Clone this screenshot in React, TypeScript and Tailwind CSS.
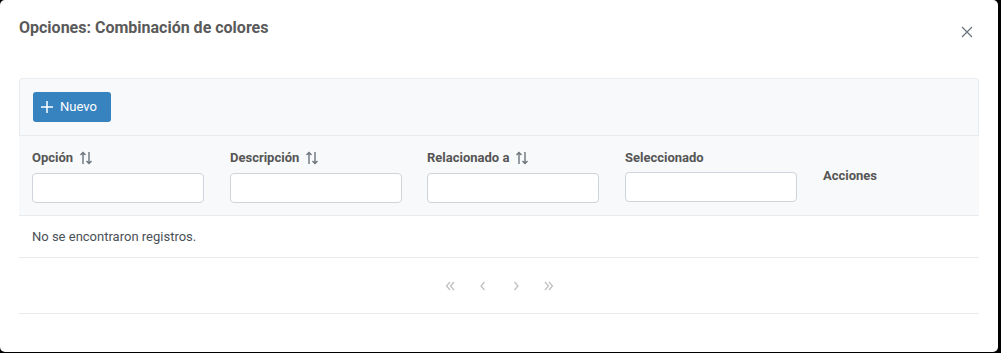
import React from "react";

const SortIcon = () => (
  <svg width="14" height="14" viewBox="0 0 14 14" fill="none" stroke="#6c757d" strokeWidth="1.4" className="ml-[6px]">
    <path d="M4 13V1.5M1.5 4L4 1.5L6.5 4" />
    <path d="M10 1V12.5M7.5 10L10 12.5L12.5 10" />
  </svg>
);

const Col = ({ label, sort, input = true, gap = 6 }: { label: string; sort?: boolean; input?: boolean; gap?: number }) => (
  <div className="pl-[13px] pr-[12px] flex flex-col justify-center">
    <div className="flex items-center h-[18px] text-[13px] font-bold text-[#555]">
      {label}
      {sort && <SortIcon />}
    </div>
    {input && (
      <div
        className={`${gap === 6 ? "mt-[6px]" : "mt-[5px]"} h-[30px] w-[172px] rounded-[4px] border border-[#ced4da] bg-white`}
      />
    )}
  </div>
);

export default function App() {
  return (
    <div className="w-[1001px] h-[353px] bg-black" style={{ fontFamily: "Roboto, 'Liberation Sans', sans-serif" }}>
      <div className="w-[998px] h-[352px] bg-white rounded-[5px] flex flex-col">
        <div className="flex items-start justify-between pl-[19px] pr-[25px] h-[60px]">
          <div className="mt-[16px] leading-[24px] text-[16px] font-bold text-[#5a5a5a]">Opciones: Combinación de colores</div>
          <svg width="12" height="12" viewBox="0 0 12 12" stroke="#6c757d" strokeWidth="1.3" className="mt-[26px]">
            <path d="M1 1L11 11M11 1L1 11" />
          </svg>
        </div>
        <div className="mx-[19px] mt-[18px] w-[960px]">
          <div className="h-[57px] bg-[#f8f9fa] border-t border-x border-[#e9ecef] rounded-t-[4px] flex items-center px-[13px]">
            <div className="h-[30px] w-[78px] bg-[#3783bf] rounded-[3px] flex items-center pl-[8px] text-white text-[13px]">
              <svg width="12" height="12" viewBox="0 0 12 12" stroke="white" strokeWidth="1.5" className="mr-[7px]">
                <path d="M6 0V12M0 6H12" />
              </svg>
              Nuevo
            </div>
          </div>
          <div className="h-[81px] bg-[#f8f9fa] border-y border-[#e9ecef] grid grid-cols-[198px_197px_198px_198px_169px] items-center">
            <Col label="Opción" sort />
            <Col label="Descripción" sort />
            <Col label="Relacionado a" sort />
            <Col label="Seleccionado" gap={5} />
            <Col label="Acciones" input={false} />
          </div>
          <div className="h-[42px] border-b border-[#e9ecef] flex items-center pl-[13px] text-[13px] text-[#495057]">
            No se encontraron registros.
          </div>
          <div className="h-[56px] border-b border-[#e9ecef] flex items-center justify-center gap-[17px]">
            {[
              "M6 2L2.5 6L6 10M10 2L6.5 6L10 10",
              "M7.5 2L4 6L7.5 10",
              "M4.5 2L8 6L4.5 10",
              "M2 2L5.5 6L2 10M6 2L9.5 6L6 10",
            ].map((d, i) => (
              <svg key={i} width="16" height="12" viewBox="0 0 12 12" fill="none" stroke="#bdbdbd" strokeWidth="1.2">
                <path d={d} />
              </svg>
            ))}
          </div>
        </div>
      </div>
    </div>
  );
}
